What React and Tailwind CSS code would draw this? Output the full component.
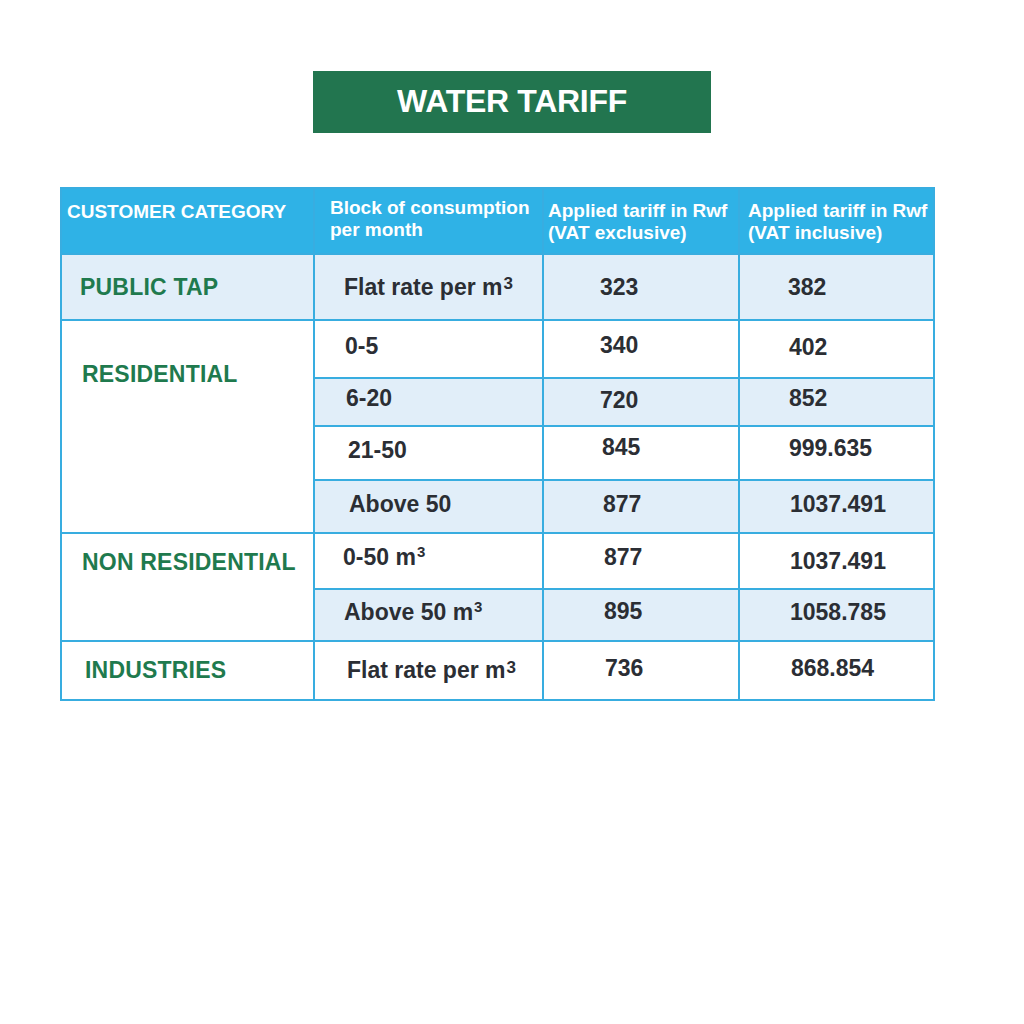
import React from 'react';

const Head = ({ children, className = '' }) => (
  <div className={`bg-[#2fb2e6] flex items-center text-white text-[19px] font-bold leading-[22px] ${className}`}>
    <div>{children}</div>
  </div>
);

const Cell = ({ children, light, className = '' }) => (
  <div className={`flex items-center text-[23px] font-bold leading-none text-[#2b2e34] ${light ? 'bg-[#e1eef9]' : 'bg-white'} ${className}`}>
    <span>{children}</span>
  </div>
);

const Cat = ({ children, light, className = '' }) => (
  <div className={`flex text-[23px] font-bold leading-none text-[#1f7a4e] tracking-[0.2px] ${light ? 'bg-[#e1eef9]' : 'bg-white'} ${className}`}>
    <span>{children}</span>
  </div>
);

// cube superscript: the "flat rate" ones sit lower and larger
const M3 = ({ flat }) =>
  flat ? (
    <sup className="text-[17px] top-[-0.3em] ml-[1px]">3</sup>
  ) : (
    <sup className="text-[15px] ml-[1px]">3</sup>
  );

export default function App() {
  return (
    <div className="w-[1024px] h-[1024px] bg-white pt-[71px]" style={{ fontFamily: '"Liberation Sans", Arial, sans-serif' }}>
      <div className="mx-auto w-[398px] h-[62px] bg-[#22754f] flex items-center justify-center pb-[2px]">
        <h1 className="text-white text-[32px] font-bold tracking-[-0.3px]">WATER TARIFF</h1>
      </div>

      <div className="ml-[60px] mt-[54px] w-[875px] grid grid-cols-[251px_227px_194px_193px] grid-rows-[64px_64px_56px_46px_52px_51px_54px_50px_57px] gap-[2px] p-[2px] bg-[#38ade0]">
        <Head className="pl-[5px] pb-[18px]">CUSTOMER CATEGORY</Head>
        <Head className="pl-[15px] pb-[5px]">Block of consumption<br />per month</Head>
        <Head className="pl-[4px] pt-[2px]">Applied tariff in Rwf<br />(VAT exclusive)</Head>
        <Head className="pl-[8px] pt-[2px]">Applied tariff in Rwf<br />(VAT inclusive)</Head>

        <Cat light className="items-center pl-[18px]">PUBLIC TAP</Cat>
        <Cell light className="pl-[29px]">Flat rate per m<M3 flat /></Cell>
        <Cell light className="pl-[56px]">323</Cell>
        <Cell light className="pl-[48px]">382</Cell>

        <Cat className="row-span-4 items-start pl-[20px] pt-[42px]">RESIDENTIAL</Cat>
        <Cell className="pl-[30px] pb-[6px]">0-5</Cell>
        <Cell className="pl-[56px] pb-[8px]">340</Cell>
        <Cell className="pl-[49px] pb-[4px]">402</Cell>

        <Cell light className="pl-[31px] pb-[8px]">6-20</Cell>
        <Cell light className="pl-[56px] pb-[4px]">720</Cell>
        <Cell light className="pl-[49px] pb-[8px]">852</Cell>

        <Cell className="pl-[33px] pb-[6px]">21-50</Cell>
        <Cell className="pl-[58px] pb-[12px]">845</Cell>
        <Cell className="pl-[49px] pb-[10px]">999.635</Cell>

        <Cell light className="pl-[34px] pb-[5px]">Above 50</Cell>
        <Cell light className="pl-[59px] pb-[5px]">877</Cell>
        <Cell light className="pl-[50px] pb-[5px]">1037.491</Cell>

        <Cat className="row-span-2 items-start pl-[20px] pt-[17px]">NON RESIDENTIAL</Cat>
        <Cell className="pl-[28px] pb-[8px]">0-50 m<M3 /></Cell>
        <Cell className="pl-[60px] pb-[8px]">877</Cell>
        <Cell className="pl-[50px]">1037.491</Cell>

        <Cell light className="pl-[29px] pb-[6px]">Above 50 m<M3 /></Cell>
        <Cell light className="pl-[60px] pb-[8px]">895</Cell>
        <Cell light className="pl-[50px] pb-[6px]">1058.785</Cell>

        <Cat className="items-center pl-[23px]">INDUSTRIES</Cat>
        <Cell className="pl-[32px]">Flat rate per m<M3 flat /></Cell>
        <Cell className="pl-[61px] pb-[4px]">736</Cell>
        <Cell className="pl-[51px] pb-[4px]">868.854</Cell>
      </div>
    </div>
  );
}
